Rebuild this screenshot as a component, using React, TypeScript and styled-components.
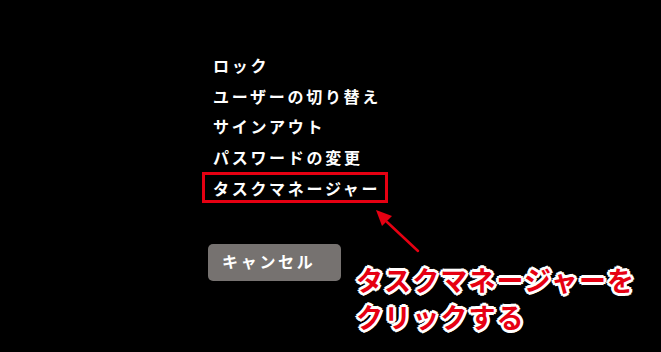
import styled, { createGlobalStyle } from 'styled-components';

const GlobalStyle = createGlobalStyle`
  html, body {
    margin: 0;
    padding: 0;
    background: #000;
  }
  body {
    font-family: "Noto Sans CJK JP", "Noto Sans", sans-serif;
  }
`;

const Screen = styled.div`
  position: relative;
  width: 661px;
  height: 352px;
  background: #000;
  overflow: hidden;
  display: flex;
  flex-direction: column;
  align-items: flex-start;
  padding: 50px 0 0 202px;
  box-sizing: border-box;
`;

const Menu = styled.ul`
  list-style: none;
  margin: 0;
  padding: 0;
  display: flex;
  flex-direction: column;
  align-items: flex-start;
`;

const MenuItem = styled.li<{ highlighted?: boolean }>`
  height: 30.6px;
  display: flex;
  align-items: center;
  padding: 0 8px 0 11px;
  box-sizing: border-box;
  color: #fff;
  font-size: 16px;
  font-weight: 700;
  letter-spacing: 2.7px;
  white-space: nowrap;
  box-shadow: ${({ highlighted }) => (highlighted ? 'inset 0 0 0 3px #e60012' : 'none')};
`;

const CancelButton = styled.button`
  margin: 41px 0 0 6px;
  width: 133px;
  height: 37px;
  border: none;
  border-radius: 5px;
  background: #767270;
  color: #fff;
  font-family: "Noto Sans CJK JP", sans-serif;
  font-size: 16px;
  font-weight: 700;
  letter-spacing: 2.7px;
  text-align: left;
  padding: 0 0 2px 14px;
`;

const Callout = styled.div`
  position: absolute;
  left: 356px;
  top: 261px;
  color: #e60012;
  font-size: 27px;
  font-weight: 700;
  line-height: 37px;
  letter-spacing: 1.1px;
  white-space: nowrap;
  text-shadow:
    2px 0 0 #fff, -2px 0 0 #fff, 0 2px 0 #fff, 0 -2px 0 #fff,
    2px 2px 0 #fff, -2px -2px 0 #fff, 2px -2px 0 #fff, -2px 2px 0 #fff,
    3px 0 0 #fff, -3px 0 0 #fff, 0 3px 0 #fff, 0 -3px 0 #fff;
`;

const Arrow = styled.svg`
  position: absolute;
  left: 370px;
  top: 205px;
`;

const items = ['ロック', 'ユーザーの切り替え', 'サインアウト', 'パスワードの変更', 'タスクマネージャー'];

export default function App() {
  return (
    <>
      <GlobalStyle />
      <Screen>
        <Menu>
          {items.map((label, i) => (
            <MenuItem key={label} highlighted={i === items.length - 1}>
              {label}
            </MenuItem>
          ))}
        </Menu>
        <CancelButton>キャンセル</CancelButton>
        <Arrow width="55" height="50" viewBox="0 0 55 50">
          <path d="M48 46 L17 17" stroke="#e60012" strokeWidth="2.5" strokeLinecap="round" />
          <path d="M6 5 L22 11 L12 21 Z" fill="#e60012" />
        </Arrow>
        <Callout>
          タスクマネージャーを
          <br />
          クリックする
        </Callout>
      </Screen>
    </>
  );
}
